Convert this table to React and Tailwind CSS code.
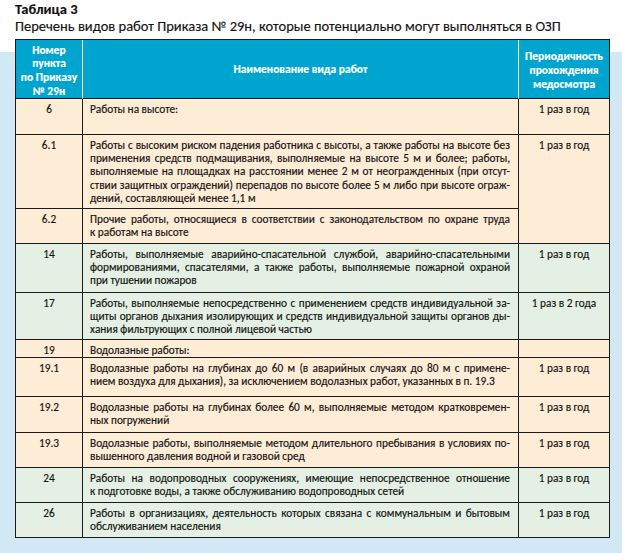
import React from 'react';

const PEACH = 'bg-[#fdecd6]';
const GREEN = 'bg-[#e3f0e3]';

const rows = [
  { n: '6', bg: PEACH, lines: ['Работы на высоте:'], period: '1 раз в год' },
  {
    n: '6.1', bg: PEACH, span: true, period: '1 раз в год',
    lines: [
      'Работы с высоким риском падения работника с высоты, а также работы на высоте без',
      'применения средств подмащивания, выполняемые на высоте 5 м и более; работы,',
      'выполняемые на площадках на расстоянии менее 2 м от неогражденных (при отсут-',
      'ствии защитных ограждений) перепадов по высоте более 5 м либо при высоте ограж-',
      'дений, составляющей менее 1,1 м',
    ],
  },
  {
    n: '6.2', bg: PEACH, skip: true,
    lines: [
      'Прочие работы, относящиеся в соответствии с законодательством по охране труда',
      'к работам на высоте',
    ],
  },
  {
    n: '14', bg: GREEN, period: '1 раз в год',
    lines: [
      'Работы, выполняемые аварийно-спасательной службой, аварийно-спасательными',
      'формированиями, спасателями, а также работы, выполняемые пожарной охраной',
      'при тушении пожаров',
    ],
  },
  {
    n: '17', bg: GREEN, period: '1 раз в 2 года',
    lines: [
      'Работы, выполняемые непосредственно с применением средств индивидуальной за-',
      'щиты органов дыхания изолирующих и средств индивидуальной защиты органов ды-',
      'хания фильтрующих с полной лицевой частью',
    ],
  },
  { n: '19', bg: PEACH, period: '', lines: ['Водолазные работы:'] },
  {
    n: '19.1', bg: PEACH, period: '1 раз в год',
    lines: [
      'Водолазные работы на глубинах до 60 м (в аварийных случаях до 80 м с примене-',
      'нием воздуха для дыхания), за исключением водолазных работ, указанных в п. 19.3',
    ],
  },
  {
    n: '19.2', bg: PEACH, period: '1 раз в год',
    lines: [
      'Водолазные работы на глубинах более 60 м, выполняемые методом кратковремен-',
      'ных погружений',
    ],
  },
  {
    n: '19.3', bg: PEACH, period: '1 раз в год',
    lines: [
      'Водолазные работы, выполняемые методом длительного пребывания в условиях по-',
      'вышенного давления водной и газовой сред',
    ],
  },
  {
    n: '24', bg: GREEN, period: '1 раз в год',
    lines: [
      'Работы на водопроводных сооружениях, имеющие непосредственное отношение',
      'к подготовке воды, а также обслуживанию водопроводных сетей',
    ],
  },
  {
    n: '26', bg: GREEN, period: '1 раз в год',
    lines: [
      'Работы в организациях, деятельность которых связана с коммунальным и бытовым',
      'обслуживанием населения',
    ],
  },
];

function Cell({ className = '', children }) {
  return <div className={`border-r border-b border-[#1b1b1b] pt-[4px] ${className}`}>{children}</div>;
}

export default function App() {
  return (
    <div className="w-[622px] h-[553px] overflow-hidden bg-[linear-gradient(to_bottom,#ffffff_52px,#d2e9f5_52px)] font-[family-name:Carlito,'Liberation_Sans',sans-serif] text-[#141212]">
      <div className="h-[39px] pl-[15px] pt-[1px] text-[14.5px] leading-[17px] [-webkit-text-stroke:0.15px]">
        <div className="font-bold">Таблица 3</div>
        <div>Перечень видов работ Приказа № 29н, которые потенциально могут выполняться в ОЗП</div>
      </div>

      <div className="ml-[15px] w-[595px] grid grid-cols-[67px_436px_91px] grid-rows-[59px_36px_74px_35px_49px_47px_18px_39px_36px_35px_35px_35px] border-l border-t border-[#1b1b1b] text-[11.3px] leading-[13.2px] [-webkit-text-stroke:0.15px]">
        <div className="bg-[#00a5cf] border-r border-b border-r-white border-b-[#1b1b1b] flex items-center justify-center pt-[4px] text-center text-white font-bold text-[11.5px] leading-[13.7px]">
          Номер<br />пункта<br />по Приказу<br />№ 29н
        </div>
        <div className="bg-[#00a5cf] border-r border-b border-r-white border-b-[#1b1b1b] flex items-center justify-center pt-[2px] text-white font-bold text-[11.5px]">
          Наименование вида работ
        </div>
        <div className="bg-[#00a5cf] border-r border-b border-[#1b1b1b] flex items-center justify-center pt-[4px] text-center text-white font-bold text-[11.5px] leading-[13.7px]">
          Периодичность<br />прохождения<br />медосмотра
        </div>

        {rows.map((r) => (
          <React.Fragment key={r.n}>
            <Cell className={`${r.bg} text-center`}>{r.n}</Cell>
            <Cell className={`${r.bg} pl-[7px] pr-[8px]`}>
              {r.lines.map((l, i) => (
                <div
                  key={i}
                  className={i < r.lines.length - 1 ? 'whitespace-nowrap text-justify [text-align-last:justify]' : 'whitespace-nowrap'}
                >
                  {l}
                </div>
              ))}
            </Cell>
            {!r.skip && (
              <Cell className={`${r.bg} text-center ${r.span ? 'row-span-2' : ''}`}>{r.period}</Cell>
            )}
          </React.Fragment>
        ))}
      </div>
    </div>
  );
}
